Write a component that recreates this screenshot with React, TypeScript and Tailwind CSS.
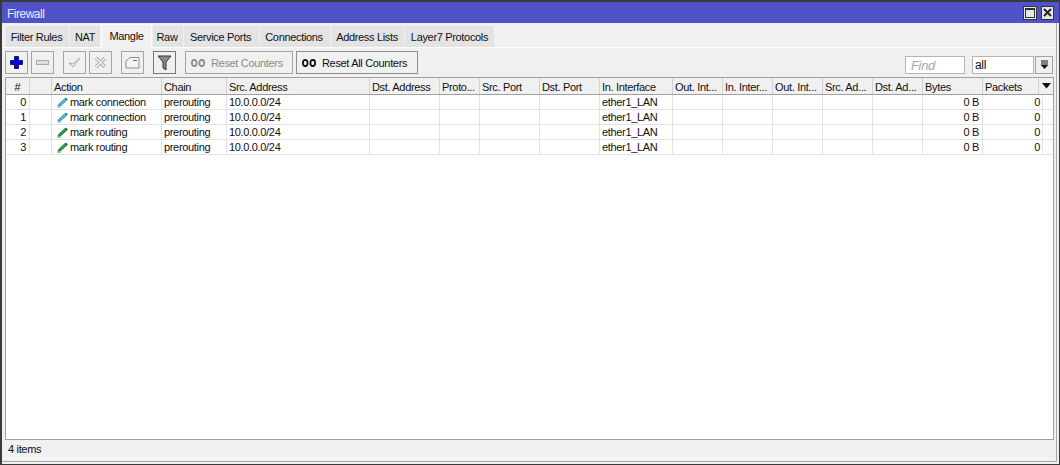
import React from 'react';

const tabs = [
  { label: 'Filter Rules', width: 'w-[63px]', shift: 'pr-[2px]' },
  { label: 'NAT', width: 'w-[30px]' },
  { label: 'Mangle', width: 'w-[51px]', active: true },
  { label: 'Raw', width: 'w-[30px]', shift: 'pr-[2px]' },
  { label: 'Service Ports', width: 'w-[75px]', shift: 'pr-[2px]' },
  { label: 'Connections', width: 'w-[70px]', shift: 'pr-[2px]' },
  { label: 'Address Lists', width: 'w-[73px]', shift: 'pr-[1px]' },
  { label: 'Layer7 Protocols', width: 'w-[89px]' },
];

const columns = [
  '#', '', 'Action', 'Chain', 'Src. Address', 'Dst. Address', 'Proto...', 'Src. Port', 'Dst. Port',
  'In. Interface', 'Out. Int...', 'In. Inter...', 'Out. Int...', 'Src. Ad...', 'Dst. Ad...', 'Bytes', 'Packets',
];

const rows = [
  { id: 0, action: 'mark connection', color: '#4cc0e6', edge: '#12617d' },
  { id: 1, action: 'mark connection', color: '#4cc0e6', edge: '#12617d' },
  { id: 2, action: 'mark routing', color: '#22a447', edge: '#0b4a1e' },
  { id: 3, action: 'mark routing', color: '#22a447', edge: '#0b4a1e' },
];

const headerCols =
  'grid grid-cols-[24px_22px_110px_65px_143px_70px_40px_60px_60px_73px_50px_50px_50px_50px_50px_60px_56px_14px]';
const rowCols =
  'grid grid-cols-[24px_22px_110px_65px_143px_70px_40px_60px_60px_73px_50px_50px_50px_50px_50px_60px_60px_10px]';

const Pencil = ({ color, edge }: { color: string; edge: string }) => (
  <svg width="13" height="11" viewBox="0 0 13 11" className="shrink-0">
    <path d="M2 9 L3 7 L9 1.5 L11 3 L5 8.5 Z" fill={color} stroke={edge} strokeWidth="0.6" />
    <path d="M9 1.5 L10 0.8 L11.8 2.2 L11 3 Z" fill={edge} />
    <path d="M1 10 H5" stroke={color} strokeWidth="1" />
  </svg>
);

const Counter = ({ color }: { color: string }) => (
  <svg width="14" height="8" viewBox="0 0 14 8" className="shrink-0 mr-[6px]">
    <rect x="1" y="1" width="4.5" height="6" rx="2" fill="none" stroke={color} strokeWidth="1.8" />
    <rect x="8.5" y="1" width="4.5" height="6" rx="2" fill="none" stroke={color} strokeWidth="1.8" />
  </svg>
);

const ToolButton = ({ className, children }: { className?: string; children: React.ReactNode }) => (
  <div className={`w-[23px] h-[23px] border flex items-center justify-center bg-[#f0f0f0] ${className ?? 'border-[#a3a3a3]'}`}>
    {children}
  </div>
);

export default function App() {
  return (
    <div className="w-[1060px] h-[465px] bg-[#f0f0f0] flex flex-col border-t-2 border-l-2 border-r border-b border-[#3a3a3a] overflow-hidden font-['Liberation_Sans',sans-serif] text-[11px] tracking-[-0.33px] text-[#111]">
      {/* Title bar */}
      <div className="h-[21px] bg-[#4f52c9] flex items-center justify-between pl-[5px] pr-[5px] shrink-0">
        <span className="text-[#eaeaff] text-[12px] tracking-[-0.5px] pt-[3px]">Firewall</span>
        <div className="flex gap-[4px]">
          <div className="w-[14px] h-[14px] bg-[#e6e6e6] border border-[#333] flex items-center justify-center">
            <div className="w-[10px] h-[10px] border border-[#333] border-t-2" />
          </div>
          <div className="w-[13px] h-[14px] bg-[#e6e6e6] border border-[#333] flex items-center justify-center">
            <svg width="9" height="9" viewBox="0 0 9 9">
              <path d="M1 1 L8 8 M8 1 L1 8" stroke="#222" strokeWidth="2" />
            </svg>
          </div>
        </div>
      </div>

      <div className="flex-1 min-h-0 flex flex-col mr-[2px] mb-[2px] border-r border-b border-[#a9a9a9]">
        {/* Tabs */}
        <div className="h-[24px] flex items-end pl-[4px] gap-px border-b border-white shrink-0 mt-[1px]">
          {tabs.map((tab) =>
            tab.active ? (
              <div key={tab.label} className={`${tab.width} h-[24px] -mb-px bg-[#f0f0f0] border border-b-0 border-[#fbfbfb] flex items-center justify-center pb-[1px]`}>
                {tab.label}
              </div>
            ) : (
              <div key={tab.label} className={`${tab.width} ${tab.shift ?? ''} h-[21px] bg-[#e3e3e3] flex items-center justify-center pt-[1px] whitespace-nowrap`}>
                {tab.label}
              </div>
            )
          )}
        </div>

        {/* Toolbar */}
        <div className="h-[29px] flex items-center pl-[3px] pr-[3px] shrink-0">
          <ToolButton className="mr-[3px] border-[#a3a3a3]">
            <svg width="15" height="15" viewBox="0 0 15 15">
              <path d="M5.5 1.5 H9.5 V5.5 H13.5 V9.5 H9.5 V13.5 H5.5 V9.5 H1.5 V5.5 H5.5 Z" fill="#0000e0" stroke="#000050" strokeWidth="0.8" />
            </svg>
          </ToolButton>
          <ToolButton className="mr-[9px] border-[#a3a3a3]">
            <div className="w-[13px] h-[5px] border border-[#aaa] bg-[#ddd]" />
          </ToolButton>
          <ToolButton className="mr-[3px] border-[#a3a3a3]">
            <svg width="15" height="15" viewBox="0 0 15 15">
              <path d="M2 8 L6 12 L13 3 L6 9 Z" fill="#eee" stroke="#aaa" />
            </svg>
          </ToolButton>
          <ToolButton className="mr-[9px] border-[#a3a3a3]">
            <svg width="15" height="15" viewBox="0 0 15 15">
              <path d="M3 3 L12 12 M12 3 L3 12" stroke="#aaa" strokeWidth="3.4" />
              <path d="M3 3 L12 12 M12 3 L3 12" stroke="#f2f2f2" strokeWidth="1.6" />
            </svg>
          </ToolButton>
          <ToolButton className="mr-[9px] border-[#a3a3a3]">
            <svg width="15" height="13" viewBox="0 0 15 13">
              <path d="M1 12 V5 L5 1.5 H14 V12 Z" fill="#f5f5f5" stroke="#8d8d8d" />
              <path d="M8 4.5 H12" stroke="#666" />
            </svg>
          </ToolButton>
          <ToolButton className="mr-[9px] border-[#777]">
            <svg width="15" height="16" viewBox="0 0 15 16">
              <path d="M1 1 H14 L9 7 V15 L6 13 V7 Z" fill="#8a8a8a" stroke="#333" />
            </svg>
          </ToolButton>
          <div className="w-[108px] h-[23px] border border-[#a3a3a3] flex items-center pl-[5px] pt-px text-[#8c8c8c] mr-[3px] whitespace-nowrap">
            <Counter color="#8c8c8c" />Reset Counters
          </div>
          <div className="w-[122px] h-[23px] border border-[#8f8f8f] flex items-center pl-[5px] pt-px whitespace-nowrap">
            <Counter color="#111" />Reset All Counters
          </div>
          <div className="flex-1" />
          <div className="w-[60px] h-[18px] mt-[5px] border border-[#b5b5b5] bg-white italic text-[13px] text-[#a8a8a8] pl-[5px] leading-[17px] mr-[7px]">Find</div>
          <div className="w-[62px] h-[18px] mt-[5px] border border-[#b5b5b5] bg-white pl-[2px] leading-[17px] text-[12px] mr-px">all</div>
          <div className="w-[18px] h-[18px] mt-[5px] border border-[#a3a3a3] flex items-center justify-center">
            <svg width="9" height="10" viewBox="0 0 9 10">
              <path d="M1 1 H8 M1 3 H8" stroke="#111" />
              <path d="M0.5 4.5 H8.5 L4.5 9 Z" fill="#111" />
            </svg>
          </div>
        </div>

        {/* Table */}
        <div className="ml-[3px] mr-[2px] flex-1 min-h-0 border-t border-l border-r border-[#a0a0a0] bg-white flex flex-col">
          <div className={`${headerCols} h-[17px] bg-[#f0f0f0] border-b border-[#a0a0a0] shrink-0`}>
            {columns.map((col, i) => (
              <div key={i} className={`border-r border-[#d2d2d2] pt-px leading-[17px] whitespace-nowrap overflow-hidden ${i === 0 ? 'text-center' : 'pl-[2px]'}`}>
                {col}
              </div>
            ))}
            <div className="flex items-center justify-center">
              <svg width="9" height="6" viewBox="0 0 9 6">
                <path d="M0 0 H9 L4.5 5.5 Z" fill="#111" />
              </svg>
            </div>
          </div>
          {rows.map((row) => (
            <div key={row.id} className={`${rowCols} h-[15px] border-b border-[#e3e3e3] leading-[14px] whitespace-nowrap`}>
              <div className="border-r border-[#e3e3e3] text-right pr-[3px]">{row.id}</div>
              <div className="border-r border-[#e3e3e3]" />
              <div className="border-r border-[#e3e3e3] flex items-center pl-[4px] gap-px">
                <Pencil color={row.color} edge={row.edge} />
                <span>{row.action}</span>
              </div>
              <div className="border-r border-[#e3e3e3] pl-[2px]">prerouting</div>
              <div className="border-r border-[#e3e3e3] pl-[2px]">10.0.0.0/24</div>
              <div className="border-r border-[#e3e3e3]" />
              <div className="border-r border-[#e3e3e3]" />
              <div className="border-r border-[#e3e3e3]" />
              <div className="border-r border-[#e3e3e3]" />
              <div className="border-r border-[#e3e3e3] pl-[2px]">ether1_LAN</div>
              <div className="border-r border-[#e3e3e3]" />
              <div className="border-r border-[#e3e3e3]" />
              <div className="border-r border-[#e3e3e3]" />
              <div className="border-r border-[#e3e3e3]" />
              <div className="border-r border-[#e3e3e3]" />
              <div className="border-r border-[#e3e3e3] text-right pr-[3px]">0 B</div>
              <div className="border-r border-[#e3e3e3] text-right pr-[2px]">0</div>
              <div />
            </div>
          ))}
        </div>

        {/* Status bar */}
        <div className="ml-[3px] mr-[2px] h-[20px] border-t border-b border-t-[#a0a0a0] border-b-[#fbfbfb] pl-[3px] leading-[18px] shrink-0 mb-[2px]">4 items</div>
      </div>
    </div>
  );
}
